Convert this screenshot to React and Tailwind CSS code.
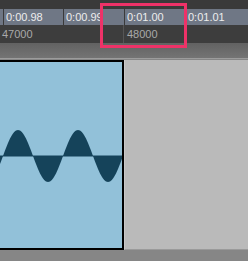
const CENTER = 94;
const AMP = 26;
const PERIOD = 60;

function wavePath(width) {
  let d = `M0 ${CENTER}`;
  for (let x = 0; x <= width; x += 1) {
    const y = CENTER - AMP * Math.cos((2 * Math.PI * (x - 18)) / PERIOD);
    d += ` L${x} ${y.toFixed(2)}`;
  }
  d += ` L${width} ${CENTER} Z`;
  return d;
}

const times = ["0:00.98", "0:00.99", "0:01.00", "0:01.01"];

export default function App() {
  return (
    <div className="relative w-[248px] h-[261px] overflow-hidden bg-[#868686] font-['Liberation_Sans',Arial,sans-serif] text-[11px]">
      <div className="h-[9px] bg-[#3a3a3a]" />

      <div className="grid grid-cols-[3px_59px_60px_60px_1fr] gap-px h-[16px] bg-[#3a3a3a]">
        <div className="bg-[#6f7785]" />
        {times.map((t) => (
          <div
            key={t}
            className="bg-[#6f7785] pl-[2px] leading-[16px] text-[#ededed] whitespace-nowrap"
          >
            {t}
          </div>
        ))}
      </div>

      <div className="flex h-[18px] bg-[#3d3d3d] text-[#a9a9a9] leading-[18px]">
        <div className="w-[123px] pl-[2px]">47000</div>
        <div className="flex-1 border-l border-[#555] pl-[3px]">48000</div>
      </div>

      <div className="h-[16px] bg-gradient-to-b from-[#626262] to-[#747474] border-b border-[#9c9c9c]" />

      <div className="flex h-[191px] pt-px">
        <div className="w-[124px] bg-[#92c1d9] border-y-2 border-r-2 border-black">
          <svg width="122" height="186" viewBox="0 0 122 186">
            <path d={wavePath(122)} fill="#15435a" />
            <line x1="0" y1={CENTER} x2="122" y2={CENTER} stroke="#15435a" strokeWidth="1" />
          </svg>
        </div>
        <div className="flex-1 bg-[#bababa] border-l border-[#c8c8c8] border-b border-b-[#9a9a9a]" />
      </div>

      <div className="absolute left-[100px] top-[3px] w-[87px] h-[45px] border-[3px] border-[#ee3268]" />
    </div>
  );
}
